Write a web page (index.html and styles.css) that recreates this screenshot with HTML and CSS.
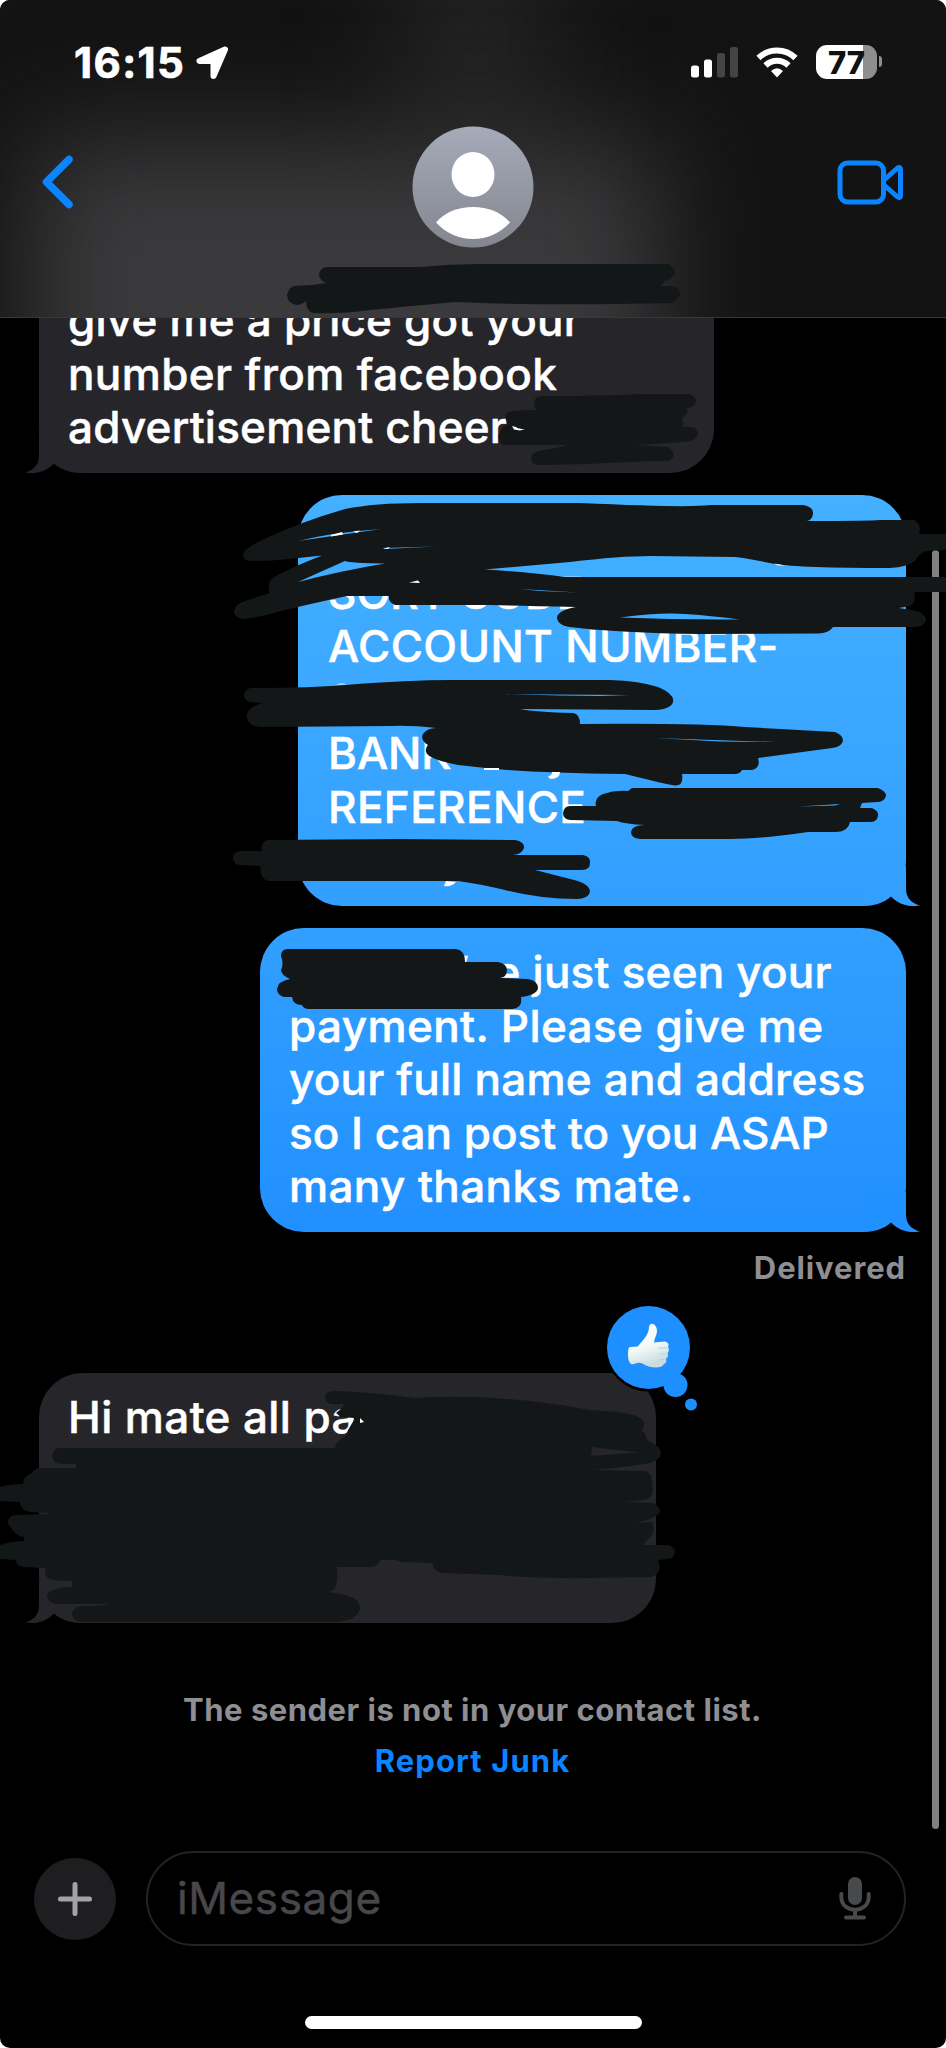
FILE: index.html
```html
<!DOCTYPE html>
<html lang="en">
<head>
<meta charset="utf-8">
<title>Messages</title>
<link rel="stylesheet" href="styles.css">
</head>
<body>
<div class="phone">
  <header class="header">
    <div class="glow-top"></div>
    <div class="glow"></div>
    <div class="status">
      <div class="clock"><span class="time">16:15</span>
        <svg width="36" height="36" viewBox="0 0 36 36"><path d="M30 4.500 L4.500 16 H18.500 V31 Z" fill="#fff" stroke="#fff" stroke-width="6" stroke-linejoin="round"/></svg>
      </div>
      <div class="indicators">
        <svg width="47" height="31" viewBox="0 0 47 31"><rect x="0" y="18.500" width="8" height="12" rx="2.500" fill="#fff"/><rect x="13" y="12.500" width="8" height="18" rx="2.500" fill="#fff"/><rect x="26" y="6" width="8" height="24.500" rx="2.500" fill="#444"/><rect x="39" y="0" width="8" height="30.500" rx="2.500" fill="#444"/></svg>
        <svg width="42" height="31" viewBox="0 0 42 31"><g fill="none" stroke="#fff" stroke-width="6"><path d="M2.500 11 A26.500 26.500 0 0 1 39.500 11"/><path d="M9.500 18.500 A16.500 16.500 0 0 1 32.500 18.500"/></g><path d="M15 24 Q21 18.500 27 24 L21 30.500Z" fill="#fff"/></svg>
        <div class="battery"><span>77</span></div>
      </div>
    </div>
    <nav class="nav">
      <svg class="back" width="32" height="56" viewBox="0 0 32 56"><path d="M28 5.500 L5.500 28 L28 50.500" fill="none" stroke="#0a84ff" stroke-width="7.500" stroke-linecap="round" stroke-linejoin="round"/></svg>
      <svg class="avatar" width="122" height="122" viewBox="0 0 122 122"><defs><linearGradient id="av" x2="0" y2="1"><stop stop-color="#a5abb9"/><stop offset="1" stop-color="#84868f"/></linearGradient></defs><circle cx="61" cy="61" r="60.500" fill="url(#av)"/><ellipse cx="61" cy="48.500" rx="21.500" ry="22.500" fill="#fff"/><path d="M24 96.500 C33 86 46 81 61 81 S89 86 98 96.500 C87 108 75 113 61 113 S35 108 24 96.500Z" fill="#fff"/></svg>
      <svg class="video" width="68" height="46" viewBox="0 0 68 46"><g fill="none" stroke="#0a84ff" stroke-width="5" stroke-linejoin="round"><rect x="3" y="3" width="43.500" height="39" rx="7.500"/><path d="M47 20 L60 8.500 Q63.500 6 63.500 10 V35 Q63.500 39 60 36.500 L47 25"/></g></svg>
    </nav>
  </header>

  <main class="thread">
    <div class="bubble received first">
      <p><span class="ls2">give me a price got your</span></p>
      <p><span class="ls3">number from facebook</span></p>
      <p><span class="ls2">advertisement cheers</span></p>
      <svg class="tail" width="60" height="60" viewBox="0 0 60 60"><path d="M14 20 V42 C14 52 9 57 0 59.500 C12 61.500 22 58 29 50.500 C36 57 46 60 58 60 L58 20Z"/></svg>
    </div>
    <div class="bubble sent bank">
      <p></p>
      <p><span>SORT CODE-</span></p>
      <p><span class="ls3">ACCOUNT NUMBER-</span></p>
      <p></p>
      <p><span>BANK-</span></p>
      <p><span class="ls3">REFERENCE</span></p>
      <p></p>
      <svg class="tail" width="60" height="60" viewBox="0 0 60 60"><path d="M46 20 V42 C46 52 51 57 60 59.500 C48 61.500 38 58 31 50.500 C24 57 14 60 2 60 L2 20Z"/></svg>
    </div>
    <div class="bubble sent paid">
      <p class="tail-end"><span class="ls2">’ve just seen your</span></p>
      <p><span class="ls3">payment. Please give me</span></p>
      <p><span class="ls2">your full name and address</span></p>
      <p><span>so I can post to you ASAP</span></p>
      <p><span class="ls3">many thanks mate.</span></p>
      <svg class="tail" width="60" height="60" viewBox="0 0 60 60"><path d="M46 20 V42 C46 52 51 57 60 59.500 C48 61.500 38 58 31 50.500 C24 57 14 60 2 60 L2 20Z"/></svg>
    </div>
    <div class="receipt"><span>Delivered</span></div>
    <div class="bubble received last">
      <p><span class="ls3">Hi mate all pa</span></p><p></p><p></p><p></p>
      <svg class="tail" width="60" height="60" viewBox="0 0 60 60"><path d="M14 20 V42 C14 52 9 57 0 59.500 C12 61.500 22 58 29 50.500 C36 57 46 60 58 60 L58 20Z"/></svg>
      <svg class="reaction" width="94" height="110" viewBox="604 1303 94 110">
        <defs><linearGradient id="th" x2=".3" y2="1"><stop stop-color="#fff"/><stop offset=".6" stop-color="#f3f9f9"/><stop offset="1" stop-color="#c9dde0"/></linearGradient></defs>
        <circle cx="648.500" cy="1347.500" r="44" fill="#000"/>
        <g fill="#1e8fff"><circle cx="648.500" cy="1347.500" r="41.500"/><circle cx="675.500" cy="1385" r="12"/><circle cx="691" cy="1404.500" r="6"/></g>
        <path d="M629 1347.500 C633 1346 637 1348 639 1345 C644 1339 649 1334 649 1327 C650 1321 657 1324 657 1331 C657 1335 654 1339 654 1342.500 L665 1341.500 Q670 1343 668 1347 Q670 1350 667.500 1353 Q669 1356 666 1359 Q667 1363 664 1364 C662 1369 650 1368 645 1365 Q641 1362 637 1363 L632 1364.500 Q628 1363 628 1355 Q628 1349 629 1347.500Z" fill="url(#th)"/>
        <path d="M658 1348 H668 M660 1354 H668 M659 1359.500 H666" stroke="#b7d3e4" stroke-width="1.200" fill="none"/>
      </svg>
    </div>
    <div class="notice"><span class="sender">The sender is not in your contact list.</span><a class="junk">Report Junk</a></div>
    <div class="scrollbar"></div>
  </main>

  <footer class="composer">
    <div class="plus"><svg width="34" height="34" viewBox="0 0 34 34"><path d="M17 2.500 V31.500 M2.500 17 H31.500" stroke="#a3a3a6" stroke-width="5" stroke-linecap="round"/></svg></div>
    <div class="field"><span class="ph">iMessage</span>
      <svg width="32" height="44" viewBox="0 0 32 44"><rect x="9" y="0" width="14" height="28" rx="7" fill="#48494b"/><path d="M2.300 17 V20 C2.300 37 29.700 37 29.700 20 V17 M16 33 V40 M7 40.500 H25" fill="none" stroke="#48494b" stroke-width="4" stroke-linecap="round"/></svg>
    </div>
  </footer>
  <div class="home"><i></i></div>

  <svg class="ink" width="946" height="2048" viewBox="0 0 946 2048">
    <g fill="#131718">
      <path d="M327 267 L420 267 Q450 264 480 264 L668 264 Q677 268 674 276 Q671 279 665 281 L661 286 L672 286 Q680 288 680 295 Q677 300 672 303 Q540 306 455 302 Q400 307 370 310 Q340 314 313 313 Q306 311 306 301 Q301 305 297 305 Q287 303 287 295 Q289 287 294 286 Q310 286 326 283 Q319 280 319 274 Q320 268 327 267Z"/>
      <path d="M541 396 Q610 396 640 394 L688 394 Q697 396 696 402 Q695 407 687 408 Q689 414 682 418 Q684 424 683 427 Q698 425 698 434 Q696 442 680 442 Q660 444 634 445 L668 447 Q675 451 673 457 Q671 462 662 461 Q620 462 590 464 L538 465 Q531 464 531 457 Q533 451 545 450 Q558 448 568 445 L503 445 Q497 441 499 434 L501 430 Q503 426 509 424 Q503 418 507 413 Q512 410 536 410 Q532 402 536 398Z"/>
      <path d="M243 555 Q243 549 262 540 Q300 522 345 509 Q375 503 420 503 L580 503 Q690 508 710 505 L803 505 Q814 507 813 514 Q812 520 807 521 Q870 521 880 520 L914 520 Q922 524 919 534 L946 534 V550 L926 551 Q918 555 915 561 Q907 567 890 568 Q800 568 775 564 Q745 558 735 557 L650 556 Q620 556 570 562 L485 569.500 Q530 572 565 577 L946 577 V592 L914 592 Q917 602 910 606 L899 608 L905 609 Q926 611 926 620 Q924 627 915 627 L833 627 Q829 633 818 633.500 L700 634 Q620 633 570 627 Q557 625 557 617 Q559 610 576 607 Q520 606 490 605 L395 605 Q388 602 389 596 L347 596 Q300 606 270 614 Q250 619 242 619 Q234 617 234 611 Q235 604 245 601 L270 593 Q266 584 273 578 Q285 570 322 555.500 Q305 557 290 559 Q270 561 250 561 Q243 560 243 555Z"/>
      <path d="M244 695 Q245 688 252 688 Q310 688 345 685 Q410 680 450 680 L610 680 Q640 681 658 687 Q675 694 673 702 Q671 709 655 710 L520 709 Q535 712 573 713 Q580 714 580 724 Q700 723 745 727 L835 732 Q843 735 843 741 Q841 747 832 748 L758 758 Q761 768 752 770 L742 770 Q740 774 735 774 L682 774 Q684 786 675 785.500 Q665 784 625 774 Q540 773 495 769 L458 765 Q428 759 426 752 Q425 748 428 745 Q420 740 423 734 Q427 728 436 728 Q410 725 390 726 L260 727 Q245 725 247 714 Q250 706 263 703 L250 702 Q244 700 244 695Z"/>
      <path d="M563 813 Q564 806 570 806 L596 806 Q594 798 603 794 Q615 790 628 791 L632 788 L878 788 Q886 791 886 796 Q884 802 877 802 L862 803 L860 808 L872 808 Q879 811 878 816 Q877 822 870 822 L850 822 Q848 832 835 832 L808 832 Q760 839 730 839 L640 839 Q631 838 631 832 Q632 825 645 825 Q625 824 617 821 L570 820 Q563 819 563 813Z"/>
      <path d="M233 858 Q233 851 241 851 L262 851 Q260 842 268 840 L400 839 L515 840 Q525 842 524 848 Q522 854 513 855 L583 855 Q591 857 590 863 Q590 870 582 870 L535 870 L578 881 Q590 885 590 892 Q588 899 577 899 Q540 899 505 890 Q480 884 458 881 L268 881 Q260 879 260 866 L240 865 Q233 864 233 858Z"/>
      <path d="M281 956 Q281 949 288 949 L456 949 Q465 950 465 962 L498 962 Q507 964 507 970 Q507 977 500 978 L528 979 Q538 981 538 988 Q537 995 521 997 Q523 1008 512 1009 L308 1009 Q303 1008 302 1005 Q293 1005 292 997 L284 997 Q277 995 277 989 Q278 981 290 979 Q281 975 281 970 Q284 964 281 956Z"/>
      <path fill-rule="evenodd" d="M52 1456 Q53 1448 60 1448 L335 1448 Q336 1441 346 1436 L348 1430 L354 1420 L354 1418 L341 1417 L336 1413 L342 1408 L344 1404 L331 1404 Q325 1402 325 1397 Q327 1391 333 1391 Q370 1392 415 1398 Q500 1393 590 1410 L617 1412 Q644 1415 644 1424 Q644 1428 641 1430 Q646 1433 647 1440 Q661 1446 661 1454 Q660 1460 650 1463 Q620 1468 592 1470 L644 1471 Q653 1472 652 1484 Q655 1500 642 1500 L625 1502 L654 1503 Q660 1507 660 1512 Q657 1518 636 1523 L652 1522 Q657 1532 647 1540 L643 1545 L668 1545 Q675 1547 675 1552 Q674 1559 667 1559 L658 1560 Q662 1569 656 1575 Q650 1578 640 1577 Q540 1580 500 1575 L442 1573 Q434 1571 432 1563 L402 1562 L396 1560 L380 1560 Q378 1567 370 1567 L337 1567 Q339 1592 328 1592 Q361 1595 360 1609 Q357 1621 335 1622 L82 1622 Q72 1621 72 1613 Q74 1606 85 1606 Q95 1606 112 1604 L56 1604 Q47 1602 47 1596 Q48 1588 72 1587 L72 1581 L53 1580 Q45 1578 45 1573 L46 1568 L24 1567 Q16 1566 16 1560 L0 1559 V1545 Q12 1541 24 1541 L24 1537 Q14 1536 8 1523 Q8 1514 18 1515 L48 1514 L48 1513 L30 1512 Q20 1510 20 1502 L0 1501 V1487 Q10 1484 23 1484 Q23 1476 32 1473 Q34 1468 42 1468 L76 1468 L76 1464 L61 1464 Q53 1463 52 1456Z M592 1447 L639 1452.500 L591 1456Z"/>
    </g>
    <g fill="#40abff">
      <path d="M298 541 Q335 532 381 529 Q340 535 298 541Z"/><path d="M298 582 Q320 572 345 561 Q350 563 385 563.500 Q340 571 298 582Z"/><path d="M620 617.500 Q660 612 685 614 Q715 616 739 619.500 Q680 620 620 617.500Z"/><path d="M383 548 L435 546.500 L385 549Z"/><path d="M505 694.300 L630 695 L600 696 L560 695.500Z"/><path d="M655 738 L775 742 L720 741.500Z"/><path d="M799 806.500 L840 804 L835 805.500Z"/><path d="M520 589 L578 592.500 L540 591Z"/>
    </g>
    <g fill="#fff"><path d="M331 535 L342 532 L343 534.500 L331 536.500Z"/><path d="M353 531.500 L360 530.500 L357 533Z"/><path d="M383 548.500 L390 547 L388 549Z"/><path d="M409 582.500 L418 580.500 L420 583Z"/><path d="M774 563.500 L786 565.500 L778 565.500Z"/><path d="M336 684.500 Q341 682.500 347 684.500Z"/><path d="M549 772 H560 Q560 779 550 779 L548 776 Q552 776 552 772Z"/><path d="M484 768 H499 V770 H484Z"/><path d="M446 881 L456 882 Q452 887 444 886Z"/><path d="M512 426 L516 427 Q518 429 525 429 L520 430.500 L514 429.500Z"/><path d="M360 1418 L364 1422 L360 1423Z"/></g>
  </svg>
</div>
</body>
</html>
```
FILE: styles.css
```css
* { box-sizing: border-box; }
html { background: #fff; }
body { margin: 0; width: 946px; height: 2048px; overflow: hidden; font-family: Inter, "Liberation Sans", sans-serif; color: #fff; }
.phone { position: relative; width: 946px; height: 2048px; background: #000; border-radius: 10px; overflow: hidden; display: flex; flex-direction: column; }
.header { position: relative; height: 318px; flex: none; background: #131314; border-bottom: 1px solid #38383a; overflow: hidden; }
.glow { position: absolute; left: 30px; top: 140px; width: 630px; height: 380px; background: #3a3a3c; filter: blur(55px); }
.glow-top { position: absolute; left: 400px; top: -60px; width: 150px; height: 200px; background: #222223; filter: blur(50px); }
.status { position: relative; height: 126px; padding: 45px 69px 0 74px; display: flex; justify-content: space-between; align-items: flex-start; }
.clock { display: flex; gap: 10px; }
.time { font-size: 42px; font-weight: 700; line-height: 36.500px; letter-spacing: 1.400px; -webkit-text-stroke: .7px #fff; }
.indicators { display: flex; align-items: center; gap: 18px; }
.battery { position: relative; width: 61px; height: 34px; border-radius: 11px; background: linear-gradient(90deg, #fff 77%, #8e8e8e 77%); color: #111; font-size: 31px; font-weight: 800; line-height: 36px; text-align: center; }
.battery::after { content: ""; position: absolute; left: 63px; top: 11px; width: 3px; height: 11px; border-radius: 0 4px 4px 0; background: #8e8e8e; }
.nav { position: relative; height: 122px; padding: 0 41px; display: grid; grid-template-columns: 1fr 122px 1fr; align-items: center; }
.back { margin-bottom: 10px; }
.video { justify-self: end; margin-bottom: 9px; }

.thread { position: relative; height: 1533px; flex: none; overflow: hidden; padding: 0 40px 0 39px; display: flex; flex-direction: column; }
.bubble { position: relative; isolation: isolate; flex: none; font-size: 44px; font-weight: 500; -webkit-text-stroke: .5px #fff; line-height: 53.500px; border-radius: 44px; padding: 18.500px 29px 18px; }
.bubble p { margin: 0; height: 53.500px; white-space: nowrap; }
.ls2 { letter-spacing: .22px; }
.ls3 { letter-spacing: .4px; }
.received { align-self: flex-start; background: #26252a; }
.sent { align-self: flex-end; }
.first { width: 675px; margin-top: -24px; padding-top: 0; border-top-left-radius: 0; border-top-right-radius: 0; }
.bank { width: 608px; height: 411px; margin-top: 22px; padding-left: 30px; background: linear-gradient(#44b0ff, #329fff); }
.paid { width: 646px; height: 304px; margin-top: 22px; background: linear-gradient(#319ffe, #2190ff); }
.last { width: 617px; height: 250px; margin-top: 95px; }
.tail { position: absolute; bottom: 0; z-index: -1; }
.received .tail { left: -14px; fill: #26252a; }
.sent .tail { right: -14px; }
.bank .tail { fill: #339fff; }
.paid .tail { fill: #2191ff; }
.tail-end { padding-left: 168px; }
.reaction { position: absolute; left: 565px; top: -70px; }
.receipt { height: 46px; text-align: right; color: #8e8e93; font-size: 31px; font-weight: 700; line-height: 47px; margin-top: 12px; margin-bottom: -12px; letter-spacing: .9px; }
.notice { margin-top: 61px; display: flex; flex-direction: column; align-items: center; font-size: 31px; font-weight: 700; line-height: 51.700px; color: #8e8e93; letter-spacing: .5px; }
.junk { color: #0a84ff; letter-spacing: 1.100px; }
.scrollbar { position: absolute; left: 932px; top: 232px; width: 7px; height: 1279px; border-radius: 4px; background: #808080; }

.composer { height: 95px; flex: none; padding: 0 40px 0 34px; display: flex; align-items: center; gap: 30px; }
.plus { width: 82px; height: 82px; border-radius: 50%; background: #1e1e20; display: flex; align-items: center; justify-content: center; }
.field { flex: 1; height: 95px; border: 2px solid #232324; border-radius: 48px; padding: 0 33px 0 29px; display: flex; align-items: center; justify-content: space-between; }
.ph { font-size: 44px; line-height: 52px; margin-top: -2px; color: #48484a; letter-spacing: .6px; -webkit-text-stroke: .5px #48484a; }
.home { height: 102px; display: flex; justify-content: center; padding-top: 70px; }
.home i { width: 337px; height: 13px; border-radius: 7px; background: #fff; }
.ink { position: absolute; left: 0; top: 0; }
```
